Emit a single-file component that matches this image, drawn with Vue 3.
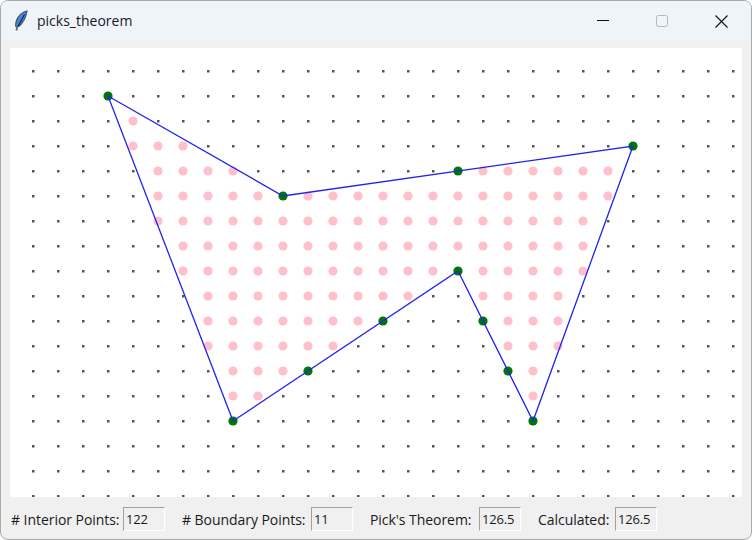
<template>
  <div class="window">
    <div class="titlebar">
      <svg class="app-icon" width="16" height="22" viewBox="0 0 16 22">
        <path d="M14 1C10 1.500 5.500 5 3.500 10.500c-.8 2.300-1 4.200-.8 5.800l3 .2c3.800-2.800 7-8 8.300-15.500z" fill="#3f86dc" stroke="#46525f" stroke-width="1.200"/>
        <path d="M11.500 4.500C9.500 8 7.500 12 5 16.500" stroke="#12294a" stroke-width="1.200" fill="none"/>
        <path d="M4.200 16.500l-.7 4" stroke="#666" stroke-width="1.800" fill="none"/>
      </svg>
      <span class="title">picks_theorem</span>
      <div class="controls">
        <svg class="ctl" width="46" height="40" viewBox="0 0 46 40"><path d="M17 19.500h12" stroke="#111" stroke-width="1"/></svg>
        <svg class="ctl" width="46" height="40" viewBox="0 0 46 40"><rect x="17.500" y="14.500" width="11" height="11" rx="2" fill="none" stroke="#b4b6bb" stroke-width="1"/></svg>
        <svg class="ctl" width="46" height="40" viewBox="0 0 46 40"><path d="M17.500 14.500l12 12M29.500 14.500l-12 12" stroke="#111" stroke-width="1.100" fill="none"/></svg>
      </div>
    </div>
    <div class="body">
      <svg class="board" width="732" height="449" viewBox="10 48 732 449">
        <rect v-for="d in gridDots" :key="d.key" :x="d.x - 1" :y="d.y - 1" width="2.500" height="2.500" fill="#555" />
        <circle v-for="d in interior" :key="d.key" :cx="d.x" :cy="d.y" r="4.600" fill="#ffc0cb" />
        <circle v-for="d in boundary" :key="d.key" :cx="d.x" :cy="d.y" r="4.600" fill="#007800" />
        <polygon :points="polyPoints" fill="none" stroke="#2222ee" stroke-width="1.300" />
      </svg>
      <div class="status">
        <div v-for="f in fields" :key="f.label" class="field">
          <span class="label">{{ f.label }}</span>
          <span class="entry">{{ f.value }}</span>
        </div>
      </div>
    </div>
  </div>
</template>

<script setup>
import { computed } from 'vue'

const COLS = 29
const ROWS = 18

const px = (i) => 33 + i * 25
const py = (j) => 71 + j * 25

// polygon corners in grid units
const poly = [[3, 1], [10, 5], [24, 3], [20, 14], [17, 8], [8, 14]]

const onEdge = (i, j) => {
  return poly.some((a, n) => {
    const b = poly[(n + 1) % poly.length]
    const cross = (b[0] - a[0]) * (j - a[1]) - (b[1] - a[1]) * (i - a[0])
    if (cross !== 0) return false
    return i >= Math.min(a[0], b[0]) && i <= Math.max(a[0], b[0]) &&
      j >= Math.min(a[1], b[1]) && j <= Math.max(a[1], b[1])
  })
}

const inside = (i, j) => {
  let hit = false
  poly.forEach((a, n) => {
    const b = poly[(n + 1) % poly.length]
    if ((a[1] > j) !== (b[1] > j) && i < a[0] + (j - a[1]) * (b[0] - a[0]) / (b[1] - a[1])) hit = !hit
  })
  return hit
}

const all = []
for (let j = 0; j < ROWS; j++) {
  for (let i = 0; i < COLS; i++) {
    const kind = onEdge(i, j) ? 'boundary' : inside(i, j) ? 'interior' : 'grid'
    all.push({ key: `${i}-${j}`, x: px(i), y: py(j), kind })
  }
}

const gridDots = all.filter((d) => d.kind === 'grid')
const interior = all.filter((d) => d.kind === 'interior')
const boundary = all.filter((d) => d.kind === 'boundary')

const polyPoints = computed(() => poly.map(([i, j]) => `${px(i)},${py(j)}`).join(' '))

const fields = [
  { label: '# Interior Points:', value: interior.length },
  { label: '# Boundary Points:', value: boundary.length },
  { label: "Pick's Theorem:", value: '126.5' },
  { label: 'Calculated:', value: '126.5' }
]
</script>

<style scoped>
.window {
  width: 752px;
  height: 540px;
  box-sizing: border-box;
  border: 1px solid #a9a9a9;
  border-radius: 8px;
  overflow: hidden;
  background: #f0f0f0;
  display: flex;
  flex-direction: column;
  font-family: "Open Sans", "Noto Sans", sans-serif;
  color: #1a1a1a;
}

.titlebar {
  height: 39px;
  background: #eff3fa;
  display: flex;
  align-items: center;
  padding-left: 12px;
}

.app-icon {
  margin-right: 8px;
}

.title {
  font-size: 14px;
  flex: 1;
}

.controls {
  display: flex;
  margin-right: 7px;
  gap: 13px;
}

.body {
  flex: 1;
  display: flex;
  flex-direction: column;
  padding: 8px 9px 0;
}

.board {
  display: block;
  background: #fff;
}

.status {
  display: grid;
  grid-template-columns: 154px 171px 151px 119px;
  column-gap: 17px;
  padding: 10px 0 0 1px;
}

.field {
  display: flex;
  align-items: center;
  justify-content: space-between;
}

.label {
  font-size: 14px;
  letter-spacing: -0.05px;
  white-space: nowrap;
}

.entry {
  box-sizing: border-box;
  width: 42px;
  height: 24px;
  border: 1px solid;
  border-color: #a0a0a0 #fff #fff #a0a0a0;
  font-size: 13px;
  letter-spacing: -0.2px;
  line-height: 22px;
  padding-left: 2px;
}
</style>

<style>
body {
  background: #fff;
}
</style>
